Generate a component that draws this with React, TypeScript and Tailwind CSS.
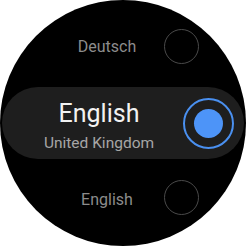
export default function App() {
  return (
    <div className="w-[246px] h-[246px] bg-white">
      <div
        className="w-[246px] h-[246px] rounded-full bg-black overflow-hidden flex flex-col"
        style={{ fontFamily: "Roboto, 'Noto Sans', sans-serif" }}
      >
        <div className="h-[72px] mt-[10px] flex items-center shrink-0">
          <div className="w-[164px] pl-[50px] pt-[2px] flex justify-center">
            <span className="text-[16px] leading-[20px] text-[#8c8c8c]">Deutsch</span>
          </div>
          <div className="w-[35px] h-[35px] rounded-full border-[1.5px] border-[#4a4a4a]" />
        </div>
        <div className="h-[72px] mt-[5px] mx-[2px] shrink-0 rounded-full bg-[#1e1e1e] flex items-center">
          <div className="w-[176px] pl-[18px] pt-[5px] flex flex-col items-center">
            <span className="text-[25px] leading-[28px] text-[#f2f2f2]">English</span>
            <span className="text-[15.5px] leading-[18px] mt-[6px] text-[#a6a6a6]">United Kingdom</span>
          </div>
          <div className="ml-[5px] w-[51px] h-[51px] rounded-full border-2 border-[#4a90f0] flex items-center justify-center">
            <div className="w-[29px] h-[29px] rounded-full bg-[#4d94f8]" />
          </div>
        </div>
        <div className="h-[72px] mt-[2px] flex items-center shrink-0">
          <div className="w-[164px] pl-[50px] pt-[5px] flex justify-center">
            <span className="text-[16px] leading-[20px] text-[#8c8c8c]">English</span>
          </div>
          <div className="w-[35px] h-[35px] rounded-full border-[1.5px] border-[#4a4a4a]" />
        </div>
      </div>
    </div>
  );
}
